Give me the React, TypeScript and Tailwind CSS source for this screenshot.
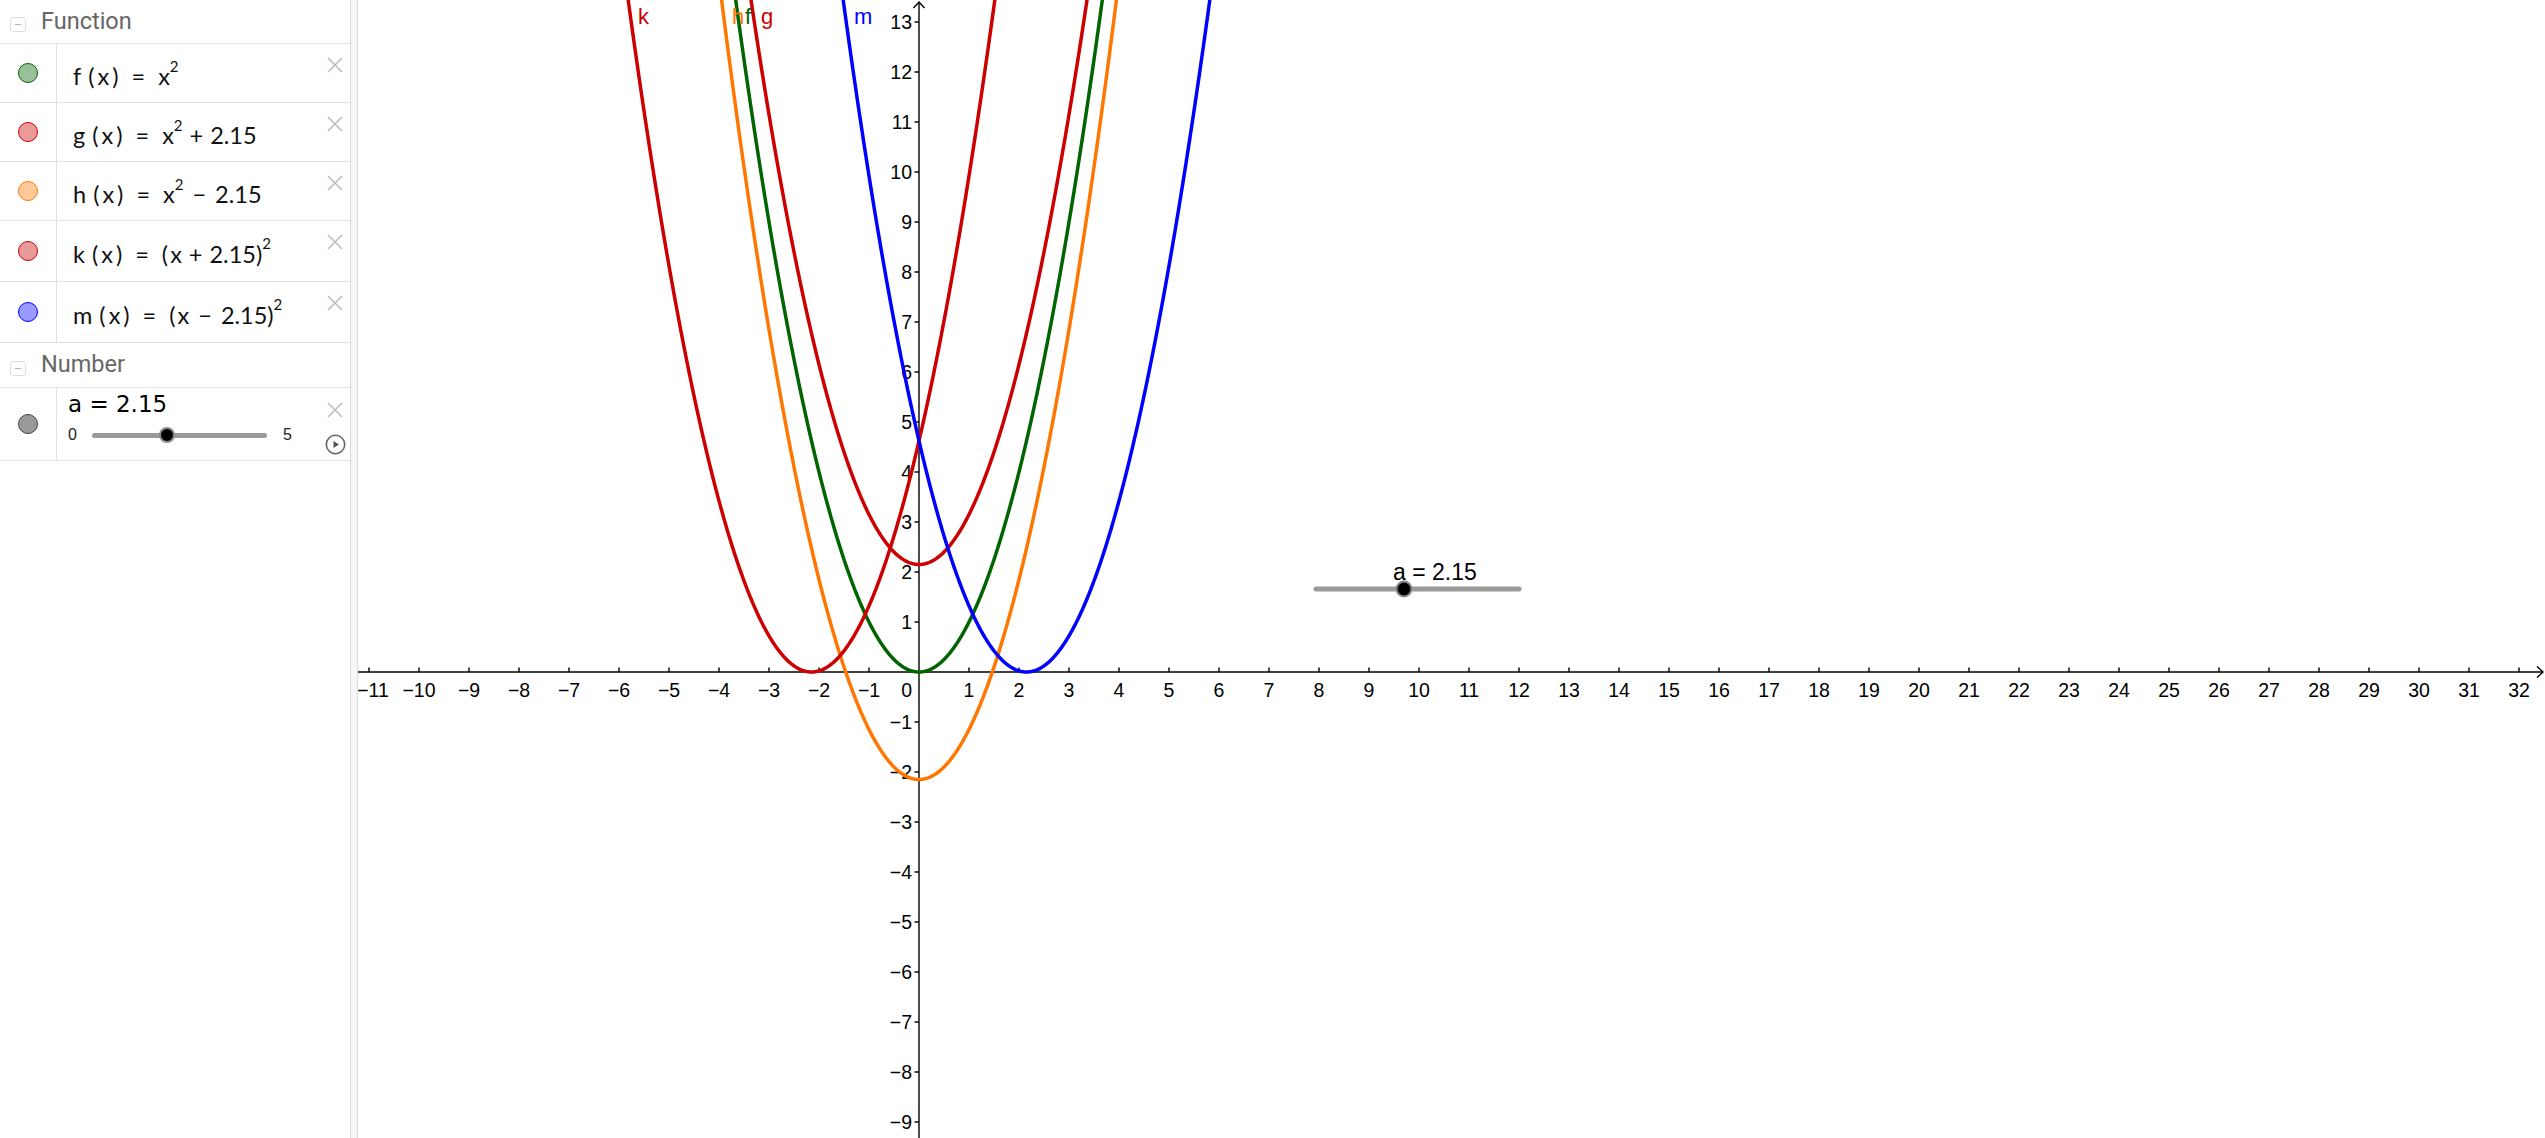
import React from "react";

// graphics view geometry (page coordinates)
const OX = 919;
const OY = 672;
const UNIT = 50;

type Plot = {
  name: string;
  color: string;
  f: (x: number) => number;
  labelX: number;
};

const PLOTS: Plot[] = [
  { name: "f", color: "#006400", f: (x) => x * x, labelX: 745 },
  { name: "g", color: "#cc0000", f: (x) => x * x + 2.15, labelX: 761 },
  { name: "h", color: "#ff7700", f: (x) => x * x - 2.15, labelX: 732 },
  { name: "k", color: "#cc0000", f: (x) => (x + 2.15) ** 2, labelX: 638 },
  { name: "m", color: "#0000ff", f: (x) => (x - 2.15) ** 2, labelX: 854 },
];

function curvePath(f: (x: number) => number) {
  const pts: string[] = [];
  for (let i = -1200; i <= 3400; i++) {
    const x = i / 100;
    const y = f(x);
    if (y > 15) continue;
    pts.push(`${(OX + x * UNIT).toFixed(2)},${(OY - y * UNIT).toFixed(2)}`);
  }
  return "M" + pts.join("L");
}

const fmt = (n: number) => (n < 0 ? `\u2212${Math.abs(n)}` : `${n}`);

function CloseIcon() {
  return (
    <svg width="16" height="16" viewBox="0 0 16 16">
      <path d="M1 1L15 15M15 1L1 15" stroke="#bdbdbd" strokeWidth="1.6" fill="none" />
    </svg>
  );
}

function PlayIcon() {
  return (
    <svg width="21" height="21" viewBox="0 0 21 21">
      <circle cx="10.5" cy="10.5" r="9.2" stroke="#666" strokeWidth="1.6" fill="none" />
      <path d="M8.5 7L14 10.5L8.5 14Z" fill="#555" />
    </svg>
  );
}

function GroupHeader({ title, h }: { title: string; h: string }) {
  return (
    <div className={`flex items-center border-b border-[#e2e2e2] pl-[10px] ${h}`}>
      <div className="mt-[6px] flex h-[15px] w-[16px] items-center justify-center rounded-[3px] border border-[#dedede]">
        <div className="h-px w-[6px] bg-[#b4b4b4]" />
      </div>
      <span className="ml-[15px] font-['Roboto',sans-serif] text-[23.5px] leading-none text-[#666]">
        {title}
      </span>
    </div>
  );
}

function FnRow({ dot, h, children }: { dot: string; h: string; children: React.ReactNode }) {
  return (
    <div className={`flex border-b border-[#e2e2e2] ${h}`}>
      <div className="flex w-[57px] shrink-0 items-center justify-center border-r border-[#e2e2e2]">
        <div className={`h-[20px] w-[20px] rounded-full border ${dot}`} />
      </div>
      <div className="flex flex-1 items-center pl-[16px] pt-[8px] font-['Lato',sans-serif] text-[23.5px] text-[#111]">
        {children}
      </div>
      <div className="flex w-[30px] shrink-0 justify-center pt-[13px]">
        <CloseIcon />
      </div>
    </div>
  );
}

const Sup = ({ hi }: { hi?: boolean }) => (
  <span className={`relative text-[15px] leading-none ${hi ? "-top-[12px]" : "-top-[11px]"}`}>2</span>
);

const Args = () => (
  <>
    <span className="ml-[7px]">(</span>
    <span className="mx-[3px]">x</span>
    <span>)</span>
    <span className="mx-[13px]">=</span>
  </>
);

function Sidebar() {
  return (
    <aside className="flex w-[350px] shrink-0 flex-col bg-white">
      <GroupHeader title="Function" h="h-[44px]" />
      <FnRow dot="bg-[#99c199] border-[#006400]" h="h-[59px]">
        <span>f</span>
        <Args />
        <span>x</span>
        <Sup />
      </FnRow>
      <FnRow dot="bg-[#eb9999] border-[#cc0000]" h="h-[59px]">
        <span>g</span>
        <Args />
        <span>x</span>
        <Sup />
        <span className="mx-[7px]">+</span>
        <span>2.15</span>
      </FnRow>
      <FnRow dot="bg-[#ffc999] border-[#ff7700]" h="h-[59px]">
        <span>h</span>
        <Args />
        <span>x</span>
        <Sup />
        <span className="mx-[9px]">{"\u2212"}</span>
        <span>2.15</span>
      </FnRow>
      <FnRow dot="bg-[#e89a9a] border-[#cc0000]" h="h-[61px]">
        <span>k</span>
        <Args />
        <span>(</span>
        <span className="ml-[2px]">x</span>
        <span className="mx-[7px]">+</span>
        <span>2.15</span>
        <span>)</span>
        <Sup hi />
      </FnRow>
      <FnRow dot="bg-[#9999ff] border-[#0000ff]" h="h-[61px]">
        <span>m</span>
        <Args />
        <span>(</span>
        <span className="ml-[2px]">x</span>
        <span className="mx-[9px]">{"\u2212"}</span>
        <span>2.15</span>
        <span>)</span>
        <Sup hi />
      </FnRow>

      <GroupHeader title="Number" h="h-[45px]" />
      <div className="flex h-[73px] border-b border-[#e2e2e2]">
        <div className="flex w-[57px] shrink-0 items-center justify-center border-r border-[#e2e2e2]">
          <div className="h-[20px] w-[20px] rounded-full border border-[#444] bg-[#999]" />
        </div>
        <div className="flex-1 pl-[11px] pt-[5px]">
          <div className="font-['DejaVu_Sans',sans-serif] text-[23px] leading-none text-black">a = 2.15</div>
          <div className="mt-[11px] flex h-[16px] items-center font-['Liberation_Sans',Arial,sans-serif] text-[16px] leading-none text-[#222]">
            <span className="w-[8px]">0</span>
            <div className="relative ml-[16px] h-[5px] w-[175px] rounded-full bg-[#9a9a9a]">
              <div className="absolute left-[75px] top-1/2 h-[16px] w-[16px] -translate-x-1/2 -translate-y-1/2 rounded-full border-2 border-[#8a8a8a] bg-black" />
            </div>
            <span className="ml-[16px]">5</span>
          </div>
        </div>
        <div className="flex w-[30px] shrink-0 flex-col items-center pt-[14px]">
          <CloseIcon />
          <div className="mt-[16px]">
            <PlayIcon />
          </div>
        </div>
      </div>
    </aside>
  );
}

function Graphics() {
  const xs: number[] = [];
  for (let i = -11; i <= 32; i++) if (i !== 0) xs.push(i);
  const ys: number[] = [];
  for (let j = -9; j <= 13; j++) if (j !== 0) ys.push(j);
  const font = "Liberation Sans, Arial, sans-serif";

  return (
    <main className="relative h-full flex-1 overflow-hidden bg-white">
      <svg className="block" width="2187" height="1138" viewBox="358 0 2187 1138">
        {/* axes */}
        <g stroke="#000" strokeWidth="1.4" fill="none">
          <line x1="358" y1={OY} x2="2543" y2={OY} />
          <polyline points={`2537,${OY - 5.5} 2543,${OY} 2537,${OY + 5.5}`} />
          <line x1={OX} y1="2" x2={OX} y2="1138" />
          <polyline points={`${OX - 5.5},8 ${OX},2 ${OX + 5.5},8`} />
          {xs.map((i) => (
            <line key={`tx${i}`} x1={OX + i * UNIT} y1={OY - 4.5} x2={OX + i * UNIT} y2={OY} />
          ))}
          {ys.map((j) => (
            <line key={`ty${j}`} x1={OX - 4.5} y1={OY - j * UNIT} x2={OX} y2={OY - j * UNIT} />
          ))}
        </g>
        <g fontFamily={font} fontSize="19.5" fill="#000">
          {xs.map((i) => (
            <text key={`lx${i}`} x={OX + i * UNIT + (i === -11 ? 4 : 0)} y={OY + 25} textAnchor="middle">
              {fmt(i)}
            </text>
          ))}
          {ys.map((j) => (
            <text key={`ly${j}`} x={OX - 7} y={OY - j * UNIT + 7} textAnchor="end">
              {fmt(j)}
            </text>
          ))}
          <text x={OX - 7} y={OY + 25} textAnchor="end">
            0
          </text>
        </g>

        {/* curves */}
        {PLOTS.map((p) => (
          <path
            key={p.name}
            d={curvePath(p.f)}
            stroke={p.color}
            strokeWidth="3.5"
            fill="none"
            strokeLinejoin="round"
          />
        ))}
        <g fontFamily={font} fontSize="22">
          {PLOTS.map((p) => (
            <text key={`n${p.name}`} x={p.labelX} y="24" fill={p.color}>
              {p.name}
            </text>
          ))}
        </g>

        {/* slider a */}
        <line x1="1316" y1="589" x2="1519" y2="589" stroke="#9a9a9a" strokeWidth="5" strokeLinecap="round" />
        <circle cx="1404" cy="589" r="7.5" fill="#000" stroke="#8a8a8a" strokeWidth="2" />
        <text x="1393" y="580" fontFamily={font} fontSize="23" fill="#000">
          a = 2.15
        </text>
      </svg>
    </main>
  );
}

export default function App() {
  return (
    <div className="flex h-[1138px] w-full overflow-hidden bg-white">
      <Sidebar />
      <div className="h-full w-[8px] shrink-0 border-x border-[#dadada] bg-[#f6f6f6]" />
      <Graphics />
    </div>
  );
}
